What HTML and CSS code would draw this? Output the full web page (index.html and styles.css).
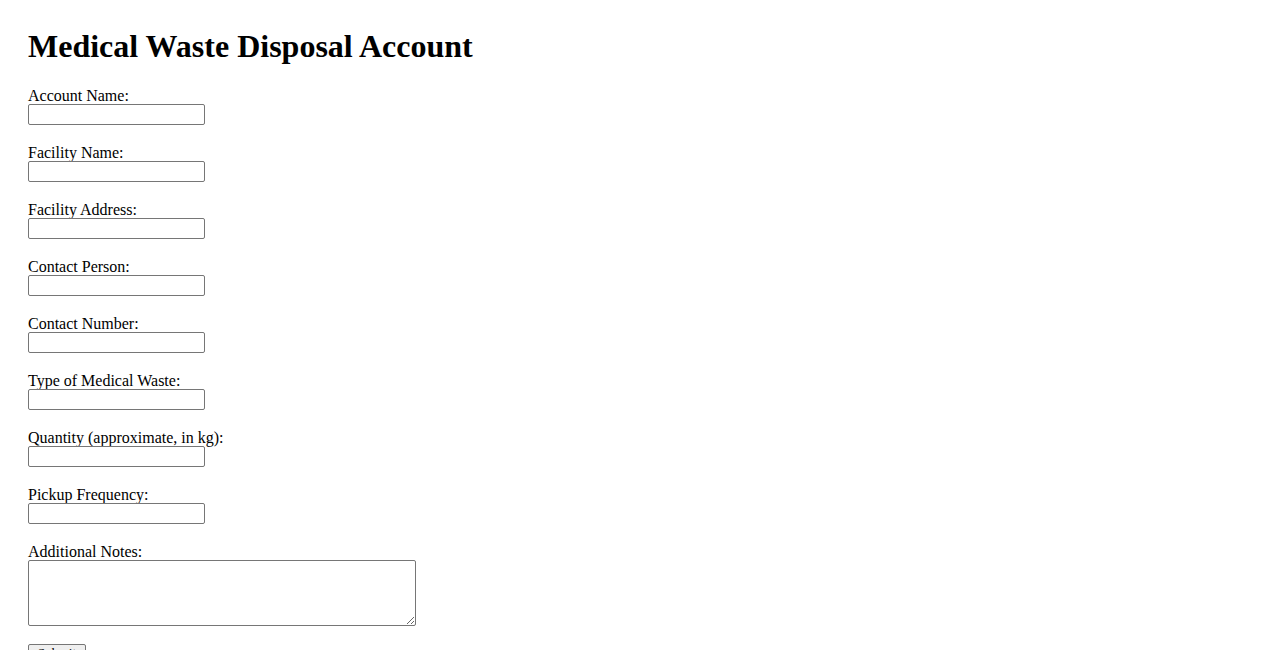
FILE: index.html
```html
<!DOCTYPE html>
<html lang="en">
<head>
    <meta charset="UTF-8">
    <meta name="viewport" content="width=device-width, initial-scale=1.0">
    <title>Medical Waste Disposal Account</title>
    <link rel="stylesheet" href="styles.css">
</head>
<body>
    <h1>Medical Waste Disposal Account</h1>
    <form class="account-form">
        <div class="form-group">
            <label for="account-name">Account Name:</label>
            <input type="text" id="account-name">
        </div>
        <div class="form-group">
            <label for="facility-name">Facility Name:</label>
            <input type="text" id="facility-name">
        </div>
        <div class="form-group">
            <label for="facility-address">Facility Address:</label>
            <input type="text" id="facility-address">
        </div>
        <div class="form-group">
            <label for="contact-person">Contact Person:</label>
            <input type="text" id="contact-person">
        </div>
        <div class="form-group">
            <label for="contact-number">Contact Number:</label>
            <input type="text" id="contact-number">
        </div>
        <div class="form-group">
            <label for="waste-type">Type of Medical Waste:</label>
            <input type="text" id="waste-type">
        </div>
        <div class="form-group">
            <label for="quantity">Quantity (approximate, in kg):</label>
            <input type="text" id="quantity">
        </div>
        <div class="form-group">
            <label for="pickup-frequency">Pickup Frequency:</label>
            <input type="text" id="pickup-frequency">
        </div>
        <div class="form-group">
            <label for="notes">Additional Notes:</label>
            <textarea id="notes"></textarea>
        </div>
        <button type="submit" class="submit-btn">Submit</button>
    </form>
</body>
</html>
```

FILE: styles.css
```css
body {
    font-family: "Liberation Serif", "Times New Roman", serif;
    font-size: 16px;
    color: #000;
    background: #fff;
    margin: 0;
    padding: 28px;
}
h1 {
    font-size: 32px;
    font-weight: bold;
    line-height: 37px;
    margin: 0 0 21px;
}
.account-form {
    display: flex;
    flex-direction: column;
    align-items: flex-start;
}
.form-group {
    display: flex;
    flex-direction: column;
    align-items: flex-start;
    margin-bottom: 18px;
}
.form-group label {
    line-height: 17px;
    padding-top: 1px;
}
.form-group input {
    width: 177px;
    height: 21px;
    box-sizing: border-box;
    border: 1px solid #767676;
    border-radius: 2px;
    padding: 1px 2px;
    font-family: Arial, "Liberation Sans", sans-serif;
    font-size: 13.33px;
    margin: 0;
}
.form-group textarea {
    width: 388px;
    height: 66px;
    box-sizing: border-box;
    border: 1px solid #767676;
    border-radius: 2px;
    padding: 2px;
    font-family: "Liberation Mono", monospace;
    font-size: 13.33px;
    margin: 0;
}
.submit-btn {
    font-family: "Liberation Serif", "Times New Roman", serif;
    font-size: 13.33px;
    line-height: 15px;
    padding: 0 6px;
    border: 1px solid #767676;
    border-radius: 2px;
    background: #efefef;
    color: #000;
    height: 21px;
    width: 58px;
    display: flex;
    align-items: flex-start;
    justify-content: center;
}
```
